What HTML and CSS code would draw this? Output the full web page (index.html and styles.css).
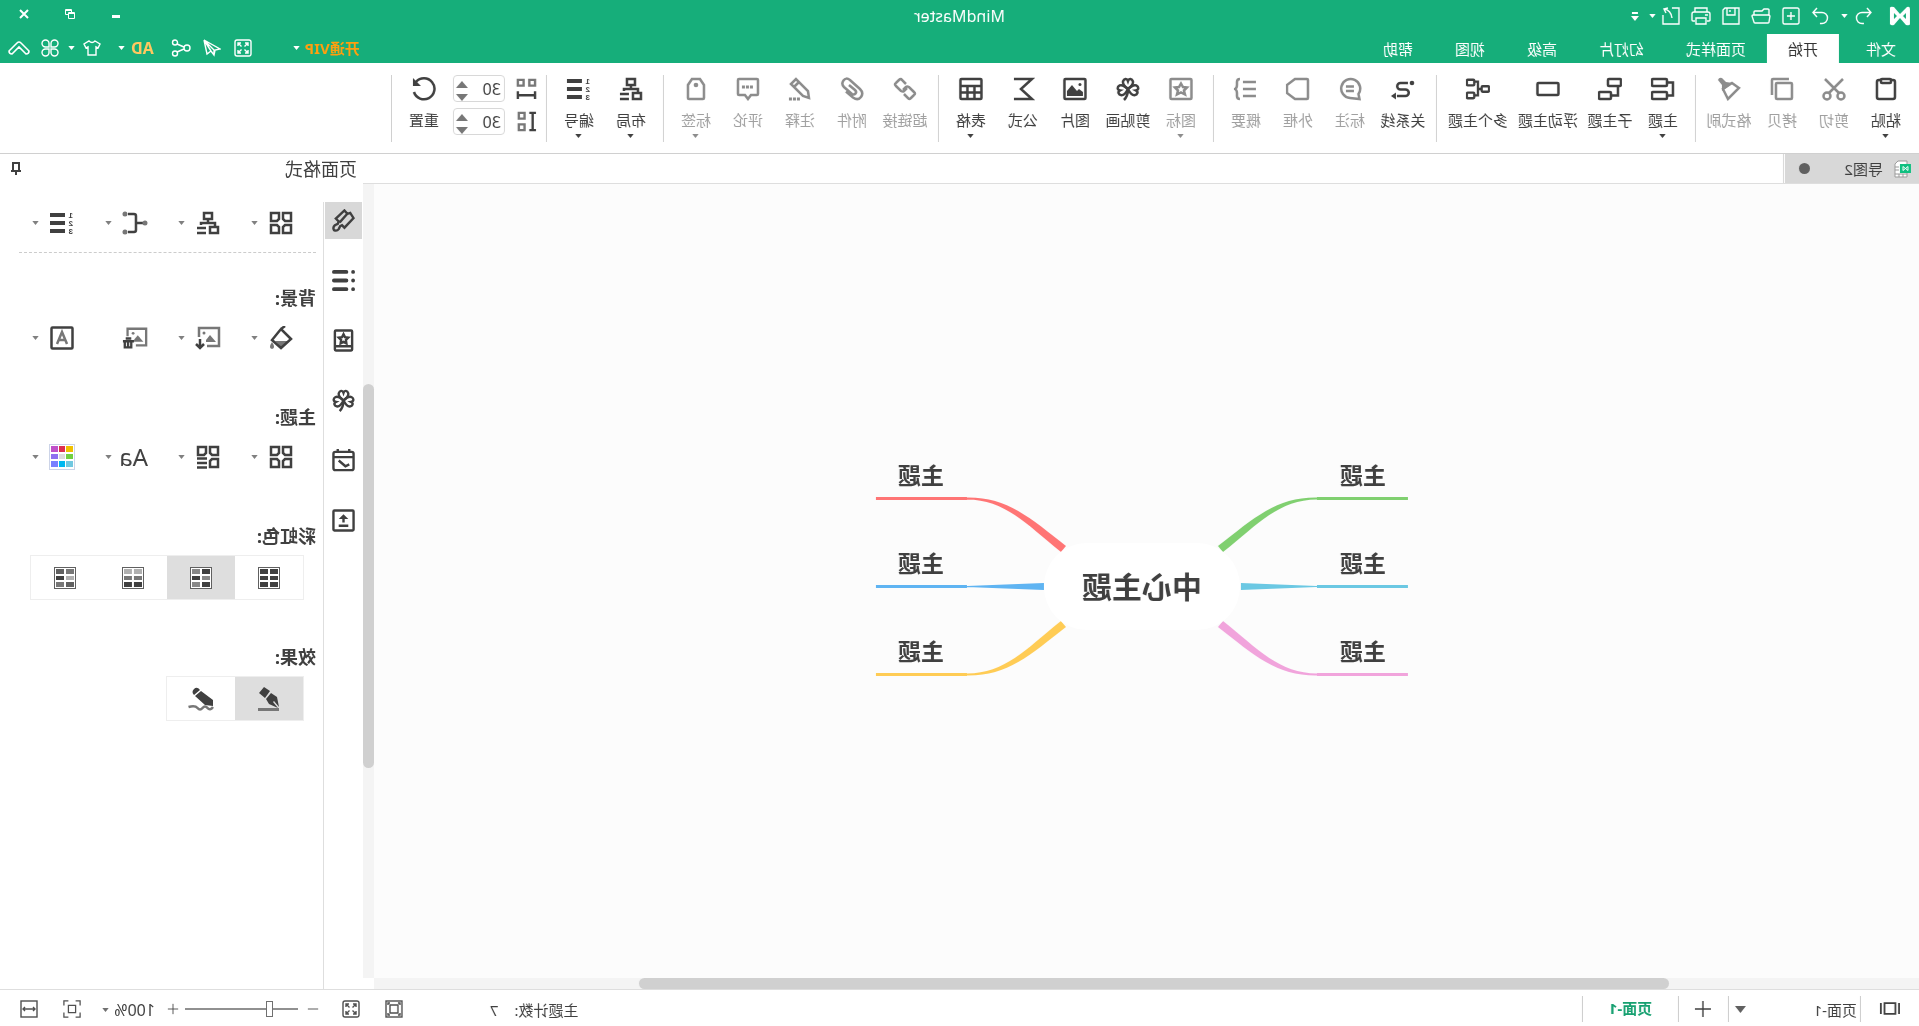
FILE: index.html
```html
<!DOCTYPE html>
<html lang="zh-CN">
<head>
<meta charset="utf-8">
<title>MindMaster</title>
<link rel="stylesheet" href="styles.css">
</head>
<body>
<svg class="sprite" aria-hidden="true">
  <symbol id="caret" viewBox="0 0 8 5"><path class="solid" d="M0 0h8L4 5z"/></symbol>
  <symbol id="logo" viewBox="0 0 20 20"><path class="solid" fill-rule="evenodd" d="M0 3Q0 0 3 1L10 8 16 1Q20 0 20 2V18Q19 20 16 19L10 12 4 19Q0 20 0 18zM4 7V13L7 10zM16 7V13L13 10z"/></symbol>
  <symbol id="undo" viewBox="0 0 18 18"><path d="M6 1L2 5.500 6 10M2 5.500H11a5 5 0 0 1 0 11H9"/></symbol>
  <symbol id="redo" viewBox="0 0 18 18"><path d="M12 1l4 4.500-4 4.500M16 5.500H7a5 5 0 0 0 0 11h2"/></symbol>
  <symbol id="new" viewBox="0 0 18 18"><rect x="1" y="1" width="16" height="16" rx="1.500"/><path d="M9 5v8M5 9h8"/></symbol>
  <symbol id="open" viewBox="0 0 20 18"><path d="M2 8V3q0-1 1-1h4l2 2h7q1 0 1 1v3M3 8h15q1 0 1 1l-2 6q0 1-1 1H3q-1 0-1-1L1 9q0-1 2-1z"/></symbol>
  <symbol id="save" viewBox="0 0 18 18"><path d="M1 1h14l2 2v14H1zM5 1v7h8V1M10 3v2"/></symbol>
  <symbol id="print" viewBox="0 0 20 18"><path d="M4 5V1h12v4M4 14H2q-1 0-1-1V7q0-2 2-2h14q2 0 2 2v6q0 1-1 1h-2M5 11h10v6H5zM3 8h3"/></symbol>
  <symbol id="export" viewBox="0 0 18 18"><path d="M8 1H1v16h16V8M12 1l4 1-2 4M16 2Q9 3 8 11"/></symbol>
  <symbol id="custom" viewBox="0 0 8 9"><path class="solid" d="M1 0h6v2H1zM0 4h8L4 9z"/></symbol>
  <symbol id="minimise" viewBox="0 0 10 10"><path class="solid" d="M1 6h8v3H1z"/></symbol>
  <symbol id="restore" viewBox="0 0 10 10"><path d="M0.500 3.500h6v6h-6zM3.500 3.500v-3h6v5h-3M0.500 4.500h6M3.500 1.500h6"/></symbol>
  <symbol id="close" viewBox="0 0 10 10"><path d="M1 1l8 8M9 1L1 9"/></symbol>
  <symbol id="expand" viewBox="0 0 18 18"><rect x="1" y="1" width="16" height="16" rx="2"/><path d="M7.500 7.500L4 4M4 7V4h3M10.500 7.500L14 4M11 4h3v3M7.500 10.500L4 14M4 11v3h3M10.500 10.500L14 14M11 14h3v-3"/></symbol>
  <symbol id="send" viewBox="0 0 18 18"><path d="M17 1L1 10l5 1 1 5 3-4zM17 1L7 11v5M17 1l-3 14-4-3"/></symbol>
  <symbol id="share" viewBox="0 0 20 18"><circle cx="4" cy="9" r="3"/><circle cx="16" cy="3.500" r="2.500"/><circle cx="16" cy="14.500" r="2.500"/><path d="M7 8l7-3M7 10l7 3"/></symbol>
  <symbol id="shirt" viewBox="0 0 18 18"><path d="M6 2L1 5l2 4 2-1v8h8V8l2 1 2-4-5-3q-3 3-6 0z"/></symbol>
  <symbol id="command" viewBox="0 0 18 18"><path d="M8 8H4.500A3.500 3.500 0 1 1 8 4.500zM10 8V4.500A3.500 3.500 0 1 1 13.500 8zM8 10v3.500A3.500 3.500 0 1 1 4.500 10zM10 10h3.500a3.500 3.500 0 1 1-3.500 3.500z"/></symbol>
  <symbol id="collapse" viewBox="0 0 22 16"><path d="M11 2q1 0 2 1l8 8q0 3-3 3l-7-7-7 7q-3 0-3-3l8-8q1-1 2-1z"/></symbol>

  <symbol id="paste" viewBox="0 0 24 24"><rect x="3" y="3" width="18" height="19" rx="2"/><rect x="7" y="2" width="10" height="4" rx="1" class="paper"/></symbol>
  <symbol id="cut" viewBox="0 0 24 24"><circle cx="5" cy="19" r="3.500"/><circle cx="19" cy="19" r="3.500"/><path d="M3 2l14 14M21 2L7 16"/></symbol>
  <symbol id="copy" viewBox="0 0 24 24"><rect x="2" y="6" width="16" height="16" rx="1"/><path d="M5 2h16q1 0 1 1v15"/></symbol>
  <symbol id="brush" viewBox="0 0 24 24"><path d="M2 11l7-5 9 6-5 10z"/><path class="solid" d="M8 6l7-1 4-4q3-1 4 2l-4 5v6z"/></symbol>
  <symbol id="topic" viewBox="0 0 24 24"><rect x="8" y="2" width="15" height="7" rx="1"/><rect x="8" y="15" width="15" height="7" rx="1"/><path d="M8 5.500H2v13h6"/></symbol>
  <symbol id="subtopic" viewBox="0 0 24 24"><rect x="1" y="2" width="13" height="7" rx="1"/><rect x="11" y="15" width="12" height="7" rx="1"/><path d="M4 9v9.500h7"/></symbol>
  <symbol id="float" viewBox="0 0 24 24"><rect x="1.500" y="6" width="21" height="12" rx="1"/></symbol>
  <symbol id="multi" viewBox="0 0 26 24"><rect x="1" y="9" width="8" height="6" rx="1"/><rect x="17" y="2" width="8" height="6" rx="1"/><rect x="17" y="16" width="8" height="6" rx="1"/><path d="M9 12h4M17 4h-4v15h4"/></symbol>
  <symbol id="relation" viewBox="0 0 24 24"><path d="M7 6h7.500a3.200 3.200 0 0 1 0 6.500h-5a3.200 3.200 0 0 0 0 6.500H18"/><circle class="solid" cx="3" cy="6" r="2.300"/><path class="solid" d="M19 15.500l5 3.500-5 3.500z"/></symbol>
  <symbol id="callout" viewBox="0 0 24 24"><path d="M2.500 22l1-5A9.500 9.500 0 1 1 12 21zM8 9.500h8M8 14h8"/></symbol>
  <symbol id="boundary" viewBox="0 0 24 24"><path d="M2 3q0-1 1-1h12l8 6v8l-8 6H3q-1 0-1-1z"/></symbol>
  <symbol id="summary" viewBox="0 0 24 24"><path d="M2 5h13M2 12h13M2 19h13M18 2q3 0 3 3v3q0 3 2 4-2 1-2 4v3q0 3-3 3"/></symbol>
  <symbol id="star" viewBox="0 0 24 24"><rect x="1.500" y="2" width="21" height="20" rx="1"/><path d="M12 6.500l2 3.500 4 .5-3 3 1 4-4-2-4 2 1-4-3-3 4-.5z"/></symbol>
  <symbol id="clover" viewBox="0 0 24 24"><path d="M12 12C8 9 6.500 7 7 4.500 8 1.500 11 1 12 4 13 1 16 1.500 17 4.500 17.500 7 16 9 12 12"/><path transform="rotate(-100 12 12)" d="M12 12C8 9 6.500 7 7 4.500 8 1.500 11 1 12 4 13 1 16 1.500 17 4.500 17.500 7 16 9 12 12"/><path transform="rotate(100 12 12)" d="M12 12C8 9 6.500 7 7 4.500 8 1.500 11 1 12 4 13 1 16 1.500 17 4.500 17.500 7 16 9 12 12"/><path d="M12 12q0 7 4 11"/></symbol>
  <symbol id="picture" viewBox="0 0 24 24"><rect x="1.500" y="2" width="21" height="20" rx="1"/><circle class="solid" cx="7" cy="7.500" r="1.500"/><path class="solid" d="M4 19v-4l4-3 2 2 5-6 5 6v5z"/></symbol>
  <symbol id="formula" viewBox="0 0 24 24"><path d="M21 2H3l11 10L3 22h18"/></symbol>
  <symbol id="table" viewBox="0 0 24 24"><rect x="1.500" y="2" width="21" height="20" rx="1"/><path d="M1 9h22M1 15.500h22M8.500 9v13M15.500 9v13"/></symbol>
  <symbol id="link" viewBox="0 0 24 24"><path d="M11 7l4-4q1-2 3 0l3 3q2 1 0 3l-5 5q-2 1-3 0l-3-3M13 17l-4 4q-1 2-3 0l-3-3q-2-1 0-3l5-5q2-1 3 0l3 3"/></symbol>
  <symbol id="attach" viewBox="0 0 24 24"><path d="M15 8l-6 5q-2 2-.5 3.500t3.500.5l8-7q3-3 .5-6.500t-6.500-.5L4 12q-4 4-1 8t8 .5l7-6"/></symbol>
  <symbol id="note" viewBox="0 0 24 24"><path d="M3 21l1-7L16 2l5 5L9 19zM13 5l5 5"/><path class="dots" d="M12 22h11"/></symbol>
  <symbol id="comment" viewBox="0 0 24 24"><path d="M2 3q0-1 1-1h18q1 0 1 1v14q0 1-1 1h-6l-3 4-3-4H3q-1 0-1-1z"/><path class="dots" d="M7 10h11"/></symbol>
  <symbol id="tag" viewBox="0 0 24 24"><path d="M4 8l4-6h8l4 6v13q0 1-1 1H5q-1 0-1-1z"/><circle class="solid" cx="12" cy="8" r="2.300"/></symbol>
  <symbol id="layout" viewBox="0 0 24 24"><rect x="8" y="2" width="8" height="6"/><path d="M12 8v4M5 16v-4h14v2M14 17h9M14 22h9"/><rect x="2" y="16" width="8" height="6"/></symbol>
  <symbol id="hspace" viewBox="0 0 22 24"><path class="soft" d="M2 3h6v6H2zM14 3h6v6h-6z"/><path d="M2 15v8M20 15v8M2 19h18"/></symbol>
  <symbol id="vspace" viewBox="0 0 22 24"><path class="soft" d="M13 3h6v6h-6zM13 15h6v6h-6z"/><path d="M1 3h7M1 21h7M4.500 3v18"/></symbol>
  <symbol id="reset" viewBox="0 0 24 24"><path d="M20 5A10.500 10.500 0 1 0 22 15"/><path class="solid" d="M23 1v8h-8z"/></symbol>

  <symbol id="pin" viewBox="0 0 12 14"><path d="M3 1h6v8H3zM1 9h10M6 9v4"/></symbol>
  <symbol id="paint" viewBox="0 0 24 24"><path d="M11 1.500L8 5 5 4 1.500 9.500l9.500 10 2.500-2.500 2 1 1.500 3q2 2.500 5 1 1.500-3-1-5l-3-1.500-1-2.500 3-3zM8 5l8 9"/></symbol>
  <symbol id="list" viewBox="0 0 24 24"><path class="list" d="M9 3h13M9 12h13M9 21h13M2 3h0M2 12h0M2 21h0"/></symbol>
  <symbol id="book" viewBox="0 0 24 24"><rect x="3" y="1.500" width="18" height="21" rx="1"/><path d="M3 18h18M12 5.500l1.500 3 3.500.5-2.500 2.500.5 3.500-3-1.500L9 15l.5-3.500L7 9l3.500-.5z"/></symbol>
  <symbol id="calendar" viewBox="0 0 24 24"><rect x="1.500" y="3" width="21" height="19" rx="2"/><path d="M2 8.500h20M6 0v4M18 0v4M6 16l4 2 7-6"/></symbol>
  <symbol id="upload" viewBox="0 0 24 24"><rect x="1.500" y="1.500" width="21" height="21" rx="1"/><path d="M12 14V8M7 17.500h10"/><path class="solid" d="M7 10.500l5-5 5 5z"/></symbol>
  <symbol id="grid4" viewBox="0 0 24 24"><path d="M2 2h8v6l-2 2H2zM14 2h8v8h-6l-2-2zM2 14h6l2 2v6H2zM16 14h6v8h-8v-6z"/></symbol>
  <symbol id="grid3" viewBox="0 0 24 24"><path d="M2 2h8v6l-2 2H2zM14 2h8v8h-6l-2-2zM2 14h6l2 2v6H2zM13 13.500h10M13 18h10M13 22.500h10"/></symbol>
  <symbol id="branch" viewBox="0 0 26 24"><path d="M5 12h7M20 3h-6q-2 0-2 2v14q0 2 2 2h6"/><g class="grey"><circle cx="3" cy="12" r="2.500"/><circle cx="23" cy="3" r="2.500"/><circle cx="23" cy="21" r="2.500"/></g></symbol>
  <symbol id="fill" viewBox="0 0 24 24"><path class="greyfill" d="M5 15h13l-6 6z"/><path d="M2 13l10-10 9 11-9 8zM12 3L8 0"/><path class="greyfill" d="M21 16q4 6 0 7-4-1 0-7z"/></symbol>
  <symbol id="picdown" viewBox="0 0 26 24"><path class="soft" d="M14 20H2V2h20v9"/><path class="greyfill" d="M5 16l6-7 4 5v2z"/><circle class="greyfill" cx="17" cy="7" r="1.500"/><path d="M21 13v9M17 18l4 4 4-4"/></symbol>
  <symbol id="picbin" viewBox="0 0 28 24"><path class="soft" d="M13 20H2V2h20v8"/><path class="greyfill" d="M5 16l6-7 4 5v2z"/><circle class="greyfill" cx="16" cy="7" r="1.500"/><path d="M15 15.500h12M18 12.500h6M18 16v6h7v-6M21.500 16v6"/></symbol>
  <symbol id="watermark" viewBox="0 0 24 24"><rect x="1.500" y="1.500" width="21" height="21" rx="1"/><path class="soft" d="M7 18l5-12 5 12M9 14h6"/></symbol>
  <symbol id="palette" viewBox="0 0 26 26"><rect class="frame" x="0.500" y="0.500" width="25" height="25"/><g stroke="none"><path fill="#f0c000" d="M2 2h7v6H2z"/><path fill="#dd3050" d="M10 2h6v6h-6z"/><path fill="#c050c8" d="M17 2h7v6h-7z"/><path fill="#70d040" d="M2 10h7v5H2z"/><path fill="#dddddd" d="M10 10h6v5h-6z"/><path fill="#9070f0" d="M17 10h7v5h-7z"/><path fill="#70c8e0" d="M2 17h7v6H2z"/><path fill="#00b8f0" d="M10 17h6v6h-6z"/><path fill="#7880ff" d="M17 17h7v6h-7z"/></g></symbol>
  <symbol id="fountain" viewBox="0 0 26 24"><path class="solid" d="M12 4l6-4 5 6-6 5zM11 6l5 6-3 5-9 4 5-6-1-1-5 6 2-10z"/><path class="underline" d="M3 22.500h21"/></symbol>
  <symbol id="pencil" viewBox="0 0 26 24"><path class="solid" d="M14 3q3-4 6-1t0 6zM13 4l6 5-10 9-8 1v-6z"/><path class="soft" d="M1 20q3 4 5.500 1t5 0 5 0 9-1"/></symbol>

  <symbol id="pages" viewBox="0 0 22 14"><path d="M1 1v12M21 1v12M5 1h12v12H5z"/></symbol>
  <symbol id="plus" viewBox="0 0 18 18"><path d="M9 1v16M1 9h16"/></symbol>
  <symbol id="plus-small" viewBox="0 0 14 14"><path d="M7 1v12M1 7h12"/></symbol>
  <symbol id="minus" viewBox="0 0 14 14"><path d="M1 7h12"/></symbol>
  <symbol id="fitmap" viewBox="0 0 18 18"><rect x="1" y="1" width="16" height="16"/><path d="M5 5h8v8H5zM3 5V3h2M13 3h2v2M3 13v2h2M13 15h2v-2"/></symbol>
  <symbol id="focus" viewBox="0 0 20 20"><path d="M6 6h8v8H6zM1 6V1h5M14 1h5v5M1 14v5h5M14 19h5v-5"/></symbol>
  <symbol id="fitwidth" viewBox="0 0 18 18"><rect x="1" y="1" width="16" height="16"/><path d="M3 9h12M5 7L3 9l2 2M13 7l2 2-2 2"/></symbol>
</svg>

<header class="titlebar">
  <div class="quick">
    <svg class="logo"><use href="#logo"/></svg>
    <button class="q-undo" aria-label="撤销"><svg class="i18"><use href="#undo"/></svg></button>
    <button aria-label="撤销列表"><svg class="caret"><use href="#caret"/></svg></button>
    <button class="q-redo" aria-label="恢复"><svg class="i18"><use href="#redo"/></svg></button>
    <button class="q" aria-label="新建"><svg class="i18"><use href="#new"/></svg></button>
    <button class="q" aria-label="打开"><svg class="i20"><use href="#open"/></svg></button>
    <button class="q" aria-label="保存"><svg class="i18"><use href="#save"/></svg></button>
    <button class="q" aria-label="打印"><svg class="i20"><use href="#print"/></svg></button>
    <button class="q" aria-label="导出"><svg class="i18"><use href="#export"/></svg></button>
    <button aria-label="导出列表"><svg class="caret"><use href="#caret"/></svg></button>
    <button class="q-custom" aria-label="自定义"><svg class="i-custom"><use href="#custom"/></svg></button>
  </div>
  <h1 class="app-name">MindMaster</h1>
  <div class="window">
    <button aria-label="最小化"><svg class="i10"><use href="#minimise"/></svg></button>
    <button aria-label="还原"><svg class="i10"><use href="#restore"/></svg></button>
    <button aria-label="关闭"><svg class="i10 heavy"><use href="#close"/></svg></button>
  </div>
</header>

<nav class="menubar">
  <div class="tabs">
    <a class="tab file" href="#file">文件</a>
    <a class="tab active" href="#home">开始</a>
    <a class="tab" href="#style">页面样式</a>
    <a class="tab" href="#slides">幻灯片</a>
    <a class="tab" href="#advanced">高级</a>
    <a class="tab" href="#view">视图</a>
    <a class="tab" href="#help">帮助</a>
  </div>
  <div class="account">
    <button class="vip">开通VIP <svg class="caret"><use href="#caret"/></svg></button>
    <button class="tool" aria-label="全屏"><svg class="i18"><use href="#expand"/></svg></button>
    <button class="tool" aria-label="发送"><svg class="i18"><use href="#send"/></svg></button>
    <button class="tool" aria-label="分享"><svg class="i20"><use href="#share"/></svg></button>
    <button class="user">AD <svg class="caret"><use href="#caret"/></svg></button>
    <button class="skin" aria-label="皮肤"><svg class="i18"><use href="#shirt"/></svg><svg class="caret"><use href="#caret"/></svg></button>
    <button class="tool-end" aria-label="应用"><svg class="i18"><use href="#command"/></svg></button>
    <button class="tool-end" aria-label="收起功能区"><svg class="i-collapse"><use href="#collapse"/></svg></button>
  </div>
</nav>

<section class="ribbon">
  <div class="group">
    <button class="item"><svg><use href="#paste"/></svg><span>粘贴</span><svg class="caret"><use href="#caret"/></svg></button>
    <button class="item off"><svg><use href="#cut"/></svg><span>剪切</span></button>
    <button class="item off"><svg><use href="#copy"/></svg><span>拷贝</span></button>
    <button class="item wide off"><svg><use href="#brush"/></svg><span>格式刷</span></button>
  </div>
  <div class="group">
    <button class="item"><svg><use href="#topic"/></svg><span>主题</span><svg class="caret"><use href="#caret"/></svg></button>
    <button class="item wide"><svg><use href="#subtopic"/></svg><span>子主题</span></button>
    <button class="item wider"><svg><use href="#float"/></svg><span>浮动主题</span></button>
    <button class="item wider"><svg><use href="#multi"/></svg><span>多个主题</span></button>
  </div>
  <div class="group">
    <button class="item wide"><svg><use href="#relation"/></svg><span>关系线</span></button>
    <button class="item off"><svg><use href="#callout"/></svg><span>标注</span></button>
    <button class="item off"><svg><use href="#boundary"/></svg><span>外框</span></button>
    <button class="item off"><svg><use href="#summary"/></svg><span>概要</span></button>
  </div>
  <div class="group">
    <button class="item off"><svg><use href="#star"/></svg><span>图标</span><svg class="caret"><use href="#caret"/></svg></button>
    <button class="item wide"><svg><use href="#clover"/></svg><span>剪贴画</span></button>
    <button class="item"><svg><use href="#picture"/></svg><span>图片</span></button>
    <button class="item"><svg><use href="#formula"/></svg><span>公式</span></button>
    <button class="item"><svg><use href="#table"/></svg><span>表格</span><svg class="caret"><use href="#caret"/></svg></button>
  </div>
  <div class="group">
    <button class="item wide off"><svg><use href="#link"/></svg><span>超链接</span></button>
    <button class="item off"><svg><use href="#attach"/></svg><span>附件</span></button>
    <button class="item off"><svg><use href="#note"/></svg><span>注释</span></button>
    <button class="item off"><svg><use href="#comment"/></svg><span>评论</span></button>
    <button class="item off"><svg><use href="#tag"/></svg><span>标签</span><svg class="caret"><use href="#caret"/></svg></button>
  </div>
  <div class="group">
    <button class="item"><svg><use href="#layout"/></svg><span>布局</span><svg class="caret"><use href="#caret"/></svg></button>
    <button class="item"><svg viewBox="0 0 24 24"><path class="bars" d="M9 4h15M9 12h15M9 20h15"/><g class="digits"><text x="1" y="7">1</text><text x="1" y="15">2</text><text x="1" y="23">3</text></g></svg><span>编号</span><svg class="caret"><use href="#caret"/></svg></button>
  </div>
  <div class="group">
    <div class="spacing">
      <div class="spin-row">
        <svg class="spin-icon"><use href="#hspace"/></svg>
        <div class="spin"><input type="text" value="30" aria-label="水平间距"><div class="arrows"><button class="up" aria-label="增加水平间距"></button><button class="down" aria-label="减少水平间距"></button></div></div>
      </div>
      <div class="spin-row">
        <svg class="spin-icon"><use href="#vspace"/></svg>
        <div class="spin"><input type="text" value="30" aria-label="垂直间距"><div class="arrows"><button class="up" aria-label="增加垂直间距"></button><button class="down" aria-label="减少垂直间距"></button></div></div>
      </div>
    </div>
    <button class="item"><svg><use href="#reset"/></svg><span>重置</span></button>
  </div>
</section>

<main class="main">
  <section class="workspace">
    <div class="doc-tabs">
      <a class="doc-tab" href="#doc">
        <svg class="doc-icon" viewBox="0 0 18 18"><path class="sheet" d="M4 1h9l3 3v13H4zM4 14h12M12 14v3M8 14v3M12 7h4M12 10h4"/><rect class="badge" x="0" y="4" width="11" height="9"/><path class="mark" d="M3 6.500v4l5-4v4z"/></svg>
        <span>导图2</span><i class="dirty"></i>
      </a>
    </div>
    <div class="board">
      <div class="canvas">
        <div class="map">
          <svg class="lines" viewBox="0 0 532 240">
            <path fill="#ff7575" d="M532 30h-91v3h91zM441 30.500C401 30 379 50 342 79L347 85C383 56 403 33 441 32.500z"/>
            <path fill="#5fb4f2" d="M532 118h-91v3h91zM441 119L364 116v7l77-3z"/>
            <path fill="#ffcc55" d="M532 206h-91v3h91zM441 208.500C401 209 379 189 342 160L347 154C383 183 403 206 441 206.500z"/>
            <path fill="#80d070" d="M0 30h91v3H0zM91 30.500C131 30 153 50 190 79L185 85C149 56 129 33 91 32.500z"/>
            <path fill="#6bc8e3" d="M0 118h91v3H0zM91 119l76-3v7l-76-3z"/>
            <path fill="#f1a4dc" d="M0 206h91v3H0zM91 208.500C131 209 153 189 190 160L185 154C149 183 129 206 91 206.500z"/>
          </svg>
          <div class="node centre">中心主题</div>
          <div class="node n1">主题</div>
          <div class="node n2">主题</div>
          <div class="node n3">主题</div>
          <div class="node n4">主题</div>
          <div class="node n5">主题</div>
          <div class="node n6">主题</div>
        </div>
      </div>
      <div class="vscroll"><div class="vthumb"></div></div>
      <div class="hscroll"><div class="hthumb"></div></div>
    </div>
  </section>

  <aside class="panel">
    <div class="panel-head"><h2>页面格式</h2><button aria-label="固定面板"><svg class="i-pin"><use href="#pin"/></svg></button></div>
    <div class="panel-body">
      <div class="strip">
        <button class="on" aria-label="页面格式"><svg><use href="#paint"/></svg></button>
        <button aria-label="大纲"><svg><use href="#list"/></svg></button>
        <button aria-label="图标"><svg><use href="#book"/></svg></button>
        <button aria-label="剪贴画"><svg><use href="#clover"/></svg></button>
        <button aria-label="任务"><svg><use href="#calendar"/></svg></button>
        <button aria-label="导出"><svg><use href="#upload"/></svg></button>
      </div>
      <div class="format">
        <div class="choices first">
          <button aria-label="结构"><svg><use href="#grid4"/></svg><svg class="caret"><use href="#caret"/></svg></button>
          <button aria-label="布局"><svg><use href="#layout"/></svg><svg class="caret"><use href="#caret"/></svg></button>
          <button aria-label="分支"><svg><use href="#branch"/></svg><svg class="caret"><use href="#caret"/></svg></button>
          <button aria-label="编号"><svg viewBox="0 0 24 24"><path class="bars" d="M9 4h15M9 12h15M9 20h15"/><g class="digits"><text x="1" y="7">1</text><text x="1" y="15">2</text><text x="1" y="23">3</text></g></svg><svg class="caret"><use href="#caret"/></svg></button>
        </div>
        <h3>背景:</h3>
        <div class="choices">
          <button aria-label="填充"><svg><use href="#fill"/></svg><svg class="caret"><use href="#caret"/></svg></button>
          <button aria-label="插入图片"><svg><use href="#picdown"/></svg><svg class="caret"><use href="#caret"/></svg></button>
          <button aria-label="移除图片"><svg><use href="#picbin"/></svg></button>
          <button aria-label="水印"><svg><use href="#watermark"/></svg><svg class="caret"><use href="#caret"/></svg></button>
        </div>
        <h3>主题:</h3>
        <div class="choices">
          <button aria-label="主题"><svg><use href="#grid4"/></svg><svg class="caret"><use href="#caret"/></svg></button>
          <button aria-label="样式"><svg><use href="#grid3"/></svg><svg class="caret"><use href="#caret"/></svg></button>
          <button aria-label="字体"><span class="aa">Aa</span><svg class="caret"><use href="#caret"/></svg></button>
          <button aria-label="颜色"><svg class="palette"><use href="#palette"/></svg><svg class="caret"><use href="#caret"/></svg></button>
        </div>
        <h3>彩虹色:</h3>
        <div class="segments">
          <label><input type="radio" name="rainbow" aria-label="单色"><svg class="swatch" viewBox="0 0 22 22"><rect class="box" x="0.500" y="0.500" width="21" height="21"/><path fill="#404040" d="M2 2h8v5H2zM12 2h8v5h-8zM2 9h8v4H2zM12 9h8v4h-8zM2 15h8v5H2zM12 15h8v5h-8z"/></svg></label>
          <label><input type="radio" name="rainbow" aria-label="彩虹一" checked><svg class="swatch" viewBox="0 0 22 22"><rect class="box" x="0.500" y="0.500" width="21" height="21"/><path fill="#404040" d="M2 2h8v5H2zM12 9h8v4h-8zM2 15h8v5H2z"/><path fill="#888888" d="M12 2h8v5h-8zM2 9h8v4H2zM12 15h8v5h-8z"/></svg></label>
          <label><input type="radio" name="rainbow" aria-label="彩虹二"><svg class="swatch" viewBox="0 0 22 22"><rect class="box" x="0.500" y="0.500" width="21" height="21"/><path fill="#b0b0b0" d="M2 2h8v5H2zM12 2h8v5h-8z"/><path fill="#777777" d="M2 9h8v4H2zM12 9h8v4h-8z"/><path fill="#404040" d="M2 15h8v5H2zM12 15h8v5h-8z"/></svg></label>
          <label><input type="radio" name="rainbow" aria-label="彩虹三"><svg class="swatch" viewBox="0 0 22 22"><rect class="box" x="0.500" y="0.500" width="21" height="21"/><path fill="#777777" d="M2 2h8v5H2zM12 15h8v5h-8z"/><path fill="#b0b0b0" d="M2 9h8v4H2z"/><path fill="#404040" d="M12 9h8v4h-8z"/><path fill="#606060" d="M12 2h8v5h-8zM2 15h8v5H2z"/></svg></label>
        </div>
        <h3>效果:</h3>
        <div class="segments">
          <label><input type="radio" name="effect" aria-label="默认" checked><svg><use href="#fountain"/></svg></label>
          <label><input type="radio" name="effect" aria-label="手绘"><svg><use href="#pencil"/></svg></label>
        </div>
      </div>
    </div>
  </aside>
</main>

<footer class="status">
  <button class="pages" aria-label="页面视图"><svg><use href="#pages"/></svg></button>
  <div class="page-pick"><select aria-label="页面"><option>页面-1</option></select><svg><use href="#caret"/></svg></div>
  <button class="add" aria-label="添加页面"><svg class="i18"><use href="#plus"/></svg></button>
  <a class="page-tab" href="#page1">页面-1</a>
  <div class="count"><span>主题计数:</span><span>7</span></div>
  <div class="fits">
    <button aria-label="适应导图"><svg class="i18"><use href="#fitmap"/></svg></button>
    <button aria-label="全屏"><svg class="i18"><use href="#expand"/></svg></button>
  </div>
  <div class="zoom">
    <button aria-label="缩小"><svg class="i12"><use href="#minus"/></svg></button>
    <input type="range" min="0" max="100" value="24" aria-label="缩放">
    <button aria-label="放大"><svg class="i12"><use href="#plus-small"/></svg></button>
  </div>
  <div class="percent"><select aria-label="缩放比例"><option>100%</option></select><svg class="caret"><use href="#caret"/></svg></div>
  <div class="fits">
    <button aria-label="聚焦"><svg class="i18"><use href="#focus"/></svg></button>
    <button aria-label="适应宽度"><svg class="i18"><use href="#fitwidth"/></svg></button>
  </div>
</footer>
</body>
</html>
```
FILE: styles.css
```css
* { box-sizing: border-box; }

body {
  margin: 0;
  min-height: 100vh;
  display: flex;
  flex-direction: column;
  overflow: hidden;
  background: #ffffff;
  color: #404040;
  font: 15px/20px "Noto Sans", "Noto Sans CJK SC", sans-serif;
  /* The whole interface is laid out left to right and shown mirrored. */
  transform: scaleX(-1);
}

button, input, select { font: inherit; color: inherit; margin: 0; }

button {
  display: flex;
  align-items: center;
  justify-content: center;
  padding: 0;
  border: 0;
  background: none;
}

h1, h2, h3 { margin: 0; font-weight: normal; }
a { color: inherit; text-decoration: none; }

svg {
  display: block;
  flex: none;
  fill: none;
  stroke: currentColor;
  stroke-width: 2.5;
}

.sprite { position: absolute; width: 0; height: 0; }
.solid { fill: currentColor; stroke: none; }
.paper { fill: #ffffff; }
.soft { stroke: #777777; }
.grey circle, .greyfill { fill: #777777; stroke: none; }
.dots { stroke-width: 3; stroke-dasharray: 3 1; }
.bars { stroke-width: 4; }
.digits text { fill: currentColor; stroke: none; font: bold 8px "Liberation Sans", sans-serif; }
.list { stroke-width: 4; stroke-linecap: round; }
.frame { stroke: #ccd4e8; stroke-width: 1; }
.underline { stroke: #777777; stroke-width: 3; }

.i10 { width: 10px; height: 10px; stroke-width: 1; }
.i12 { width: 12px; height: 12px; stroke-width: 1; }
.i18 { width: 18px; height: 18px; stroke-width: 1.4; }
.i20 { width: 20px; height: 18px; stroke-width: 1.4; }
.heavy { stroke-width: 2; }
.caret { width: 7px; height: 4px; }

/* Title bar */
.titlebar {
  display: grid;
  grid-template-columns: 1fr auto 1fr;
  align-items: center;
  height: 32px;
  background: #16ae7a;
  color: #ffffff;
}
.quick { display: flex; align-items: center; padding-left: 9px; }
.logo { width: 20px; height: 20px; margin-right: 17px; }
.q-undo { margin-right: 7px; }
.q-redo { margin: 0 5px 0 12px; }
.q { width: 30px; }
.q-custom { margin-left: 10px; }
.i-custom { width: 8px; height: 9px; }
.app-name { font-size: 16px; }
.window { display: flex; justify-content: flex-end; padding: 0 1px 4px 0; }
.window button { width: 46px; height: 20px; }

/* Menu bar */
.menubar {
  display: flex;
  justify-content: space-between;
  height: 31px;
  background: #16ae7a;
  color: #ffffff;
}
.tabs { display: flex; padding-top: 2px; }
.tab { padding: 5px 21px 4px; }
.tab.file { margin-right: 4px; padding-left: 23px; padding-right: 23px; }
.tab.active { background: #ffffff; color: #333333; }
.account { display: flex; align-items: center; padding-right: 8px; }
.vip { gap: 5px; margin-right: 34px; color: #ff9f0e; font-weight: bold; }
.user { gap: 6px; margin: 0 17px 0 12px; color: #ffc860; font-size: 16px; font-weight: bold; }
.vip .caret, .user .caret { color: #ffffff; }
.tool { width: 31px; }
.skin { gap: 8px; margin-right: 9px; }
.tool-end + .tool-end { margin-left: 11px; }
.i-collapse { width: 22px; height: 16px; stroke-width: 1.6; }

/* Ribbon */
.ribbon {
  display: flex;
  padding: 12px 0 11px 1px;
  border-bottom: 1px solid #d0d0d0;
}
.group {
  display: flex;
  padding: 0 6px;
  height: 67px;
  border-right: 1px solid #d0d0d0;
}
.item {
  flex-direction: column;
  justify-content: flex-start;
  width: 52px;
  padding-top: 2px;
  color: #404040;
  white-space: nowrap;
}
.item svg { width: 24px; height: 24px; }
.item span { margin-top: 9px; }
.item .caret { width: 7px; height: 4px; margin-top: 4px; }
.item.wide { width: 54px; }
.item.wider { width: 70px; }
.item.off { color: #8c8c8c; }
.item.off span { color: #a0a0a0; }
.spacing { display: flex; flex-direction: column; gap: 6px; width: 90px; }
.spin-row { display: flex; align-items: center; gap: 11px; padding-left: 3px; }
.spin-icon { width: 21px; height: 23px; }
.spin {
  display: flex;
  width: 52px;
  height: 27px;
  border: 1px solid #d8d8d8;
  border-radius: 4px;
}
.spin input {
  flex: 1;
  min-width: 0;
  padding: 0 0 0 3px;
  border: 0;
  background: none;
  font-size: 16px;
}
.arrows { display: flex; flex-direction: column; justify-content: space-between; padding: 5px 2px 0 0; }
.up, .down { border: 6px solid transparent; border-top: 0; border-bottom: 7px solid #777777; }
.down { border-bottom: 0; border-top: 7px solid #777777; }

/* Work area */
.main { display: flex; flex: 1; }
.workspace { display: flex; flex-direction: column; flex: 1; min-width: 0; }
.doc-tabs { height: 30px; border-bottom: 1px solid #dedede; }
.doc-tab {
  display: flex;
  align-items: center;
  width: 136px;
  height: 29px;
  padding: 0 15px 0 8px;
  background: #d8d8d8;
  border-right: 1px solid #d8d8d8;
  box-shadow: inset -1px 0 #ffffff;
}
.doc-icon { width: 18px; height: 18px; margin-right: 10px; stroke-width: 1; }
.sheet { stroke: #999999; fill: #ffffff; }
.badge { fill: #0fc080; stroke: none; }
.mark { stroke: #ffffff; }
.dirty { width: 11px; height: 11px; margin-left: auto; border-radius: 50%; background: #606060; }
.board { display: grid; flex: 1; grid-template: 1fr 11px / 1fr 11px; }
.canvas {
  display: grid;
  place-content: center;
  padding: 12px 0 0 9px;
  background: #fcfcfc;
}
.map { position: relative; width: 532px; height: 240px; }
.lines { width: 532px; height: 240px; stroke: none; }
.node { position: absolute; width: 90px; text-align: center; font-size: 23px; line-height: 30px; font-weight: bold; }
.centre { left: 168px; top: 76px; width: 196px; border-radius: 43px; background: #ffffff; font-size: 30px; line-height: 87px; }
.n1, .n2, .n3 { left: 0; }
.n4, .n5, .n6 { left: 442px; }
.n1, .n4 { top: -7px; }
.n2, .n5 { top: 81px; }
.n3, .n6 { top: 169px; }
.vscroll { padding: 200px 0 210px; background: #f4f4f4; }
.vthumb { height: 100%; border-radius: 6px; background: #d0d0d0; }
.hscroll { padding: 0 265px 0 250px; background: #f4f4f4; }
.hthumb { height: 100%; border-radius: 6px; background: #d0d0d0; }

/* Side panel */
.panel { flex: none; width: 363px; }
.panel-head { display: flex; align-items: center; justify-content: space-between; height: 30px; padding: 0 10px 0 6px; }
.panel-head h2 { font-size: 18px; }
.i-pin { width: 12px; height: 14px; stroke-width: 2; }
.panel-body { display: flex; height: calc(100% - 30px); padding-top: 18px; }
.strip { display: flex; flex-direction: column; gap: 23px; width: 39px; padding-left: 1px; }
.strip button { width: 37px; height: 37px; }
.strip button.on { background: #d8d8d8; }
.strip svg { width: 23px; height: 23px; }
.format { flex: 1; padding: 0 19px 0 7px; border-left: 1px solid #dedede; }
.choices { display: grid; grid-template-columns: 73px 73px 73px 1fr; height: 42px; padding-left: 22px; }
.choices button { justify-content: flex-start; gap: 10px; }
.choices svg { width: 26px; height: 24px; }
.choices .palette { height: 26px; }
.choices .caret { width: 7px; height: 4px; color: #808080; }
.choices.first { height: 51px; padding-bottom: 9px; margin-bottom: 33px; border-bottom: 1px dashed #cccccc; }
.format h3 { margin: 0 0 7px; font-size: 18px; line-height: 24px; font-weight: bold; }
.choices + h3 { margin-top: 46px; }
.segments + h3 { margin-top: 45px; }
.choices.first + h3 { margin-top: 0; }
.aa { width: 26px; font-size: 24px; }
.segments { display: inline-flex; margin-left: 12px; border: 1px solid #eeeeee; vertical-align: top; }
.segments label { position: relative; display: grid; place-items: center; width: 68px; height: 43px; }
.segments input { position: absolute; inset: 0; width: 100%; height: 100%; margin: 0; opacity: 0; }
.segments label:has(:checked) { background: #dedede; }
.segments svg { width: 26px; height: 24px; }
.segments .swatch { width: 22px; height: 22px; stroke: none; }
.box { fill: #ffffff; stroke: #606060; stroke-width: 1; }

/* Status bar */
.status { display: flex; align-items: center; height: 37px; padding: 1px 17px 0 0; border-top: 1px solid #dedede; }
.status select { appearance: none; padding: 0; border: 0; background: none; }
.pages { width: 59px; height: 26px; border-right: 1px solid #cccccc; }
.pages svg { width: 20px; height: 13px; stroke-width: 2; }
.page-pick { display: flex; align-items: center; width: 132px; height: 26px; padding: 2px 6px 0 3px; border-right: 1px solid #cccccc; }
.page-pick select { flex: 1; }
.page-pick svg { width: 11px; height: 7px; color: #606060; }
.add { width: 50px; height: 26px; border-right: 1px solid #cccccc; }
.page-tab { width: 96px; padding: 2px 0 4px; border-right: 1px solid #cccccc; color: #16a070; text-align: center; font-weight: bold; }
.count { display: flex; gap: 16px; margin: 2px 84px 0 auto; }
.fits { display: flex; gap: 19px; color: #505050; }
.fits button { width: 24px; height: 24px; }
.zoom { display: flex; align-items: center; margin: 0 6px 0 14px; }
.zoom button { width: 24px; height: 24px; }
.zoom input { width: 113px; height: 17px; margin: 0 0 0 3px; appearance: none; background: none; }
.zoom input::-webkit-slider-runnable-track { height: 2px; background: #909090; }
.zoom input::-webkit-slider-thumb { appearance: none; width: 7px; height: 16px; margin-top: -7px; border: 1px solid #707070; background: #ffffff; }
.percent { display: flex; align-items: center; gap: 5px; margin: 2px 18px 0 0; font-size: 16px; }
.percent .caret { color: #707070; }
```
